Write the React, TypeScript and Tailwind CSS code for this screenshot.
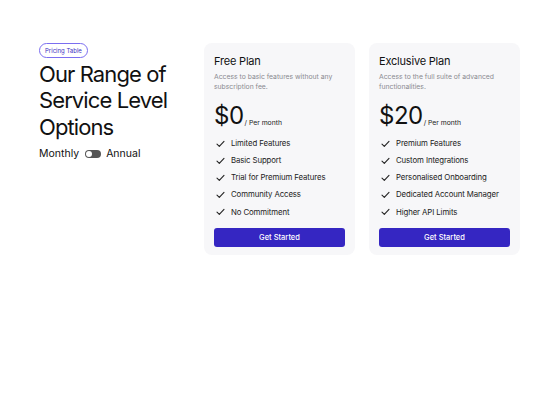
import React from "react";

const font = { fontFamily: "Inter, 'Noto Sans', sans-serif" };

function Check() {
  return (
    <svg width="9" height="8" viewBox="0 0 9 8" fill="none" className="shrink-0">
      <path d="M1 4.2 L3.3 6.4 L8 1.4" stroke="#222" strokeWidth="1.1" strokeLinecap="round" strokeLinejoin="round" />
    </svg>
  );
}

function Card({ title, desc, price, features }: { title: string; desc: string; price: string; features: string[] }) {
  return (
    <div className="w-[151px] h-[212px] rounded-[8px] bg-[#f7f7f9] px-[10px] pt-[11px] flex flex-col">
      <div className="text-[11px] leading-[14px] text-[#111] tracking-[-0.2px]">{title}</div>
      <div className="mt-[4px] text-[6.8px] leading-[10px] text-[#8a8a90] pr-[6px]">{desc}</div>
      <div className="mt-[11px] flex items-end">
        <span className="text-[24px] leading-[26px] text-[#111] tracking-[-0.5px]">{price}</span>
        <span className="text-[6.8px] leading-[10px] text-[#222] mb-[1px] ml-[1px]">/ Per month</span>
      </div>
      <div className="mt-[6px] flex flex-col">
        {features.map((f) => (
          <div key={f} className="h-[17.2px] flex items-center gap-[6px] pl-[2px]">
            <Check />
            <span className="text-[7.8px] text-[#222] tracking-[-0.1px]">{f}</span>
          </div>
        ))}
      </div>
      <button className="mt-[7px] h-[19px] w-full rounded-[3px] bg-[#3526c2] text-white text-[7.5px] font-medium">
        Get Started
      </button>
    </div>
  );
}

export default function App() {
  return (
    <div className="w-[560px] h-[400px] bg-white pt-[43px] pl-[39px] flex" style={font}>
      <div className="w-[165px] flex flex-col items-start">
        <div className="h-[15px] px-[5px] rounded-full border border-[#7b6ef0] text-[6px] text-[#3a2fc0] flex items-center">
          Pricing Table
        </div>
        <div className="mt-[3px] text-[22px] leading-[26.3px] text-[#111] tracking-[-0.9px]">
          Our Range of
          <br />
          Service Level
          <br />
          Options
        </div>
        <div className="mt-[6px] flex items-center text-[10.5px] text-[#111]">
          <span>Monthly</span>
          <span className="ml-[6px] w-[16px] h-[8px] rounded-full bg-[#555] relative">
            <span className="absolute left-[1px] top-[1px] w-[6px] h-[6px] rounded-full bg-white" />
          </span>
          <span className="ml-[5px]">Annual</span>
        </div>
      </div>
      <div className="flex gap-[14px] items-start">
        <Card
          title="Free Plan"
          desc="Access to basic features without any subscription fee."
          price="$0"
          features={["Limited Features", "Basic Support", "Trial for Premium Features", "Community Access", "No Commitment"]}
        />
        <Card
          title="Exclusive Plan"
          desc="Access to the full suite of advanced functionalities."
          price="$20"
          features={["Premium Features", "Custom Integrations", "Personalised Onboarding", "Dedicated Account Manager", "Higher API Limits"]}
        />
      </div>
    </div>
  );
}
